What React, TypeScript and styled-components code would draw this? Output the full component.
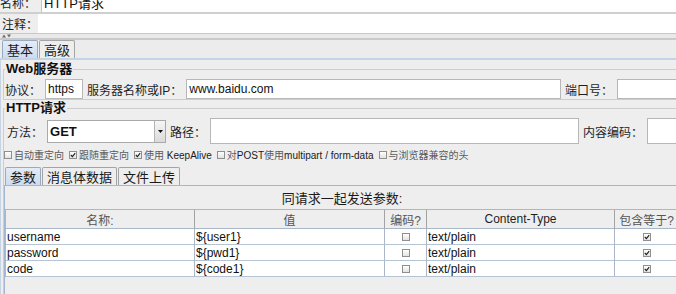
import styled, { createGlobalStyle, css } from 'styled-components'

type Param = {
  name: string
  value: string
  encode: boolean
  contentType: string
  includeEquals: boolean
}

const params: Param[] = [
  { name: 'username', value: '${user1}', encode: false, contentType: 'text/plain', includeEquals: true },
  { name: 'password', value: '${pwd1}', encode: false, contentType: 'text/plain', includeEquals: true },
  { name: 'code', value: '${code1}', encode: false, contentType: 'text/plain', includeEquals: true },
]

function CheckBox({ checked }: { checked?: boolean }) {
  return (
    <Box>
      {checked && (
        <svg width="6" height="6" viewBox="0 0 6 6">
          <path d="M0.8 3 L2.4 4.6 L5.2 1.1" stroke="#1f1f1f" strokeWidth="1.1" fill="none" />
        </svg>
      )}
    </Box>
  )
}

export default function App() {
  return (
    <Page>
      <GlobalStyle />
      <NameRow>
        <FieldLabel $pad={0} $w={41}>名称：</FieldLabel>
        <TextBox $flat>HTTP请求</TextBox>
      </NameRow>
      <CommentRow>
        <FieldLabel $pad={2} $w={38}>注释：</FieldLabel>
        <TextBox $flat $noBorder />
      </CommentRow>
      <Splitter>
        <svg width="12" height="4" viewBox="0 0 12 4">
          <path d="M2 3.5 L4 0.5 L6 3.5 Z" fill="#6b6b6b" />
          <path d="M7 0.5 L11 0.5 L9 3.5 Z" fill="#6b6b6b" />
        </svg>
      </Splitter>
      <MainTabBar>
        <Tab $active>基本</Tab>
        <Tab>高级</Tab>
      </MainTabBar>
      <ContentPanel>
        <Fieldset>
          <Legend>Web服务器</Legend>
          <FormRow $h={20} $top={2}>
            <FieldLabel $pad={1}>协议：</FieldLabel>
            <TextBox $w={38}>https</TextBox>
            <FieldLabel>服务器名称或IP：</FieldLabel>
            <TextBox>www.baidu.com</TextBox>
            <FieldLabel>端口号：</FieldLabel>
            <TextBox $w={62} />
          </FormRow>
        </Fieldset>
        <Fieldset $grow>
          <Legend>HTTP请求</Legend>
          <FormRow $h={26} $top={2}>
            <FieldLabel $pad={3}>方法：</FieldLabel>
            <Select>
              <SelectValue>GET</SelectValue>
              <SelectArrow>
                <svg width="5" height="3" viewBox="0 0 5 3">
                  <path d="M0 0 L5 0 L2.5 3 Z" fill="#111" />
                </svg>
              </SelectArrow>
            </Select>
            <FieldLabel>路径：</FieldLabel>
            <TextBox $h={26} />
            <FieldLabel>内容编码：</FieldLabel>
            <TextBox $h={26} $w={32} />
          </FormRow>
          <OptionRow>
            <Option>
              <CheckBox />
              <span>自动重定向</span>
            </Option>
            <Option>
              <CheckBox checked />
              <span>跟随重定向</span>
            </Option>
            <Option>
              <CheckBox checked />
              <span>
                使用 <Latin>KeepAlive</Latin>
              </span>
            </Option>
            <Option>
              <CheckBox />
              <span>
                对<Latin>POST</Latin>使用<Latin>multipart / form-data</Latin>
              </span>
            </Option>
            <Option>
              <CheckBox />
              <span>与浏览器兼容的头</span>
            </Option>
          </OptionRow>
          <SubTabBar>
            <SubTab $active>参数</SubTab>
            <SubTab>消息体数据</SubTab>
            <SubTab>文件上传</SubTab>
          </SubTabBar>
          <SubPanel>
            <TableTitle>同请求一起发送参数:</TableTitle>
            <ParamTable>
              <HeadCell>名称:</HeadCell>
              <HeadCell>值</HeadCell>
              <HeadCell>编码?</HeadCell>
              <HeadCell $latin>Content-Type</HeadCell>
              <HeadCell>包含等于?</HeadCell>
              {params.map((p) => (
                <Row key={p.name}>
                  <Cell>{p.name}</Cell>
                  <Cell>{p.value}</Cell>
                  <Cell $center>
                    <CheckBox checked={p.encode} />
                  </Cell>
                  <Cell>{p.contentType}</Cell>
                  <Cell $center>
                    <CheckBox checked={p.includeEquals} />
                  </Cell>
                </Row>
              ))}
            </ParamTable>
          </SubPanel>
        </Fieldset>
      </ContentPanel>
    </Page>
  )
}

const GlobalStyle = createGlobalStyle`
  html, body {
    margin: 0;
    padding: 0;
    background: #eeeeee;
    overflow: hidden;
  }

  body {
    font-family: "Liberation Sans", "Noto Sans CJK SC", sans-serif;
    color: #1c1c1c;
  }
`

const Page = styled.div`
  width: 679px;
  height: 294px;
  overflow: hidden;
  display: flex;
  flex-direction: column;
  background: #eeeeee;
`

const NameRow = styled.div`
  display: flex;
  align-items: stretch;
  height: 20px;
  margin-top: -8px;
  flex-shrink: 0;
  border-bottom: 2px solid #cfcfcf;
  font-size: 13px;
`

const CommentRow = styled.div`
  display: flex;
  align-items: stretch;
  height: 19px;
  flex-shrink: 0;
  border-bottom: 1px solid #c8c8c8;
`

const Splitter = styled.div`
  height: 4px;
  flex-shrink: 0;
  display: flex;
  align-items: flex-start;
  border-bottom: 2px solid #c9c9cd;
  background: #e9e9e9;
  svg {
    display: block;
  }
`

const FieldLabel = styled.span<{ $pad?: number; $w?: number }>`
  display: flex;
  align-items: center;
  flex-shrink: 0;
  font-size: 12px;
  color: #1e1e1e;
  white-space: nowrap;
  padding-left: ${({ $pad }) => $pad ?? 0}px;
  ${({ $w }) =>
    $w &&
    css`
      width: ${$w}px;
      box-sizing: border-box;
    `}
`

const TextBox = styled.div<{ $w?: number; $h?: number; $flat?: boolean; $noBorder?: boolean }>`
  box-sizing: border-box;
  height: ${({ $h }) => $h ?? 20}px;
  display: flex;
  align-items: center;
  padding: 0 2px;
  background: #ffffff;
  border: 1px solid #b7b7b7;
  font-size: 12px;
  color: #111;
  white-space: nowrap;
  overflow: hidden;
  ${({ $w }) =>
    $w
      ? css`
          width: ${$w}px;
          flex-shrink: 0;
        `
      : css`
          flex: 1;
          min-width: 0;
        `}
  ${({ $flat }) =>
    $flat &&
    css`
      height: auto;
      font-size: 13px;
      border-width: 0 0 0 1px;
      border-color: #c4c4c4;
    `}
  ${({ $noBorder }) =>
    $noBorder &&
    css`
      border: none;
    `}
`

const MainTabBar = styled.div`
  display: flex;
  align-items: flex-end;
  gap: 1px;
  height: 18px;
  flex-shrink: 0;
  padding-left: 2px;
  background: #ececec;
  border-bottom: 2px solid #c3d4e9;
`

const tabLook = css<{ $active?: boolean }>`
  box-sizing: border-box;
  display: flex;
  align-items: center;
  font-size: 13px;
  color: #1a1a1a;
  border: 1px solid #a4a4a4;
  border-bottom: none;
  border-radius: 2px 2px 0 0;
  background: #eeeeee;
  white-space: nowrap;
  ${({ $active }) =>
    $active &&
    css`
      border-color: #98aac0;
      background: linear-gradient(#e3ecf6, #cddcee);
    `}
`

const Tab = styled.div<{ $active?: boolean }>`
  ${tabLook}
  height: 18px;
  padding: 0 4px;
`

const ContentPanel = styled.div`
  flex: 1;
  min-height: 0;
  display: flex;
  flex-direction: column;
  padding-top: 1px;
  border-left: 1px solid #c6d3e2;
`

const Fieldset = styled.fieldset<{ $grow?: boolean }>`
  margin: 0 0 0 2px;
  padding: 0 0 0 0;
  border: 1px solid #cdcdcd;
  border-right: none;
  min-width: 0;
  display: flex;
  flex-direction: column;
  ${({ $grow }) =>
    $grow &&
    css`
      flex: 1;
      min-height: 0;
      margin-top: 0;
      border-bottom: none;
    `}
`

const Legend = styled.legend`
  font-size: 13px;
  font-weight: 700;
  line-height: 16px;
  padding: 0 1px;
  margin-left: 1px;
  color: #111;
`

const FormRow = styled.div<{ $h: number; $top: number }>`
  display: flex;
  align-items: center;
  gap: 4px;
  height: ${({ $h }) => $h}px;
  margin-top: ${({ $top }) => $top}px;
  flex-shrink: 0;
`

const Select = styled.div`
  box-sizing: border-box;
  width: 119px;
  height: 23px;
  flex-shrink: 0;
  display: flex;
  background: #ffffff;
  border: 1px solid #a9a9a9;
`

const SelectValue = styled.span`
  flex: 1;
  display: flex;
  align-items: center;
  padding-left: 2px;
  font-size: 13px;
  font-weight: 700;
  color: #111;
`

const SelectArrow = styled.span`
  width: 10px;
  display: flex;
  align-items: center;
  justify-content: center;
  border-left: 1px solid #b4b4b4;
  background: linear-gradient(#f6f6f6, #dadada);
`

const OptionRow = styled.div`
  display: flex;
  align-items: center;
  gap: 5px;
  height: 17px;
  margin-top: 2px;
  padding-left: 0;
  flex-shrink: 0;
  font-size: 10px;
  color: #5a5a5a;
  white-space: nowrap;
`

const Option = styled.span`
  display: flex;
  align-items: center;
  gap: 2px;
`

const Latin = styled.span`
  color: #1a1a1a;
`

const Box = styled.span`
  box-sizing: border-box;
  width: 8px;
  height: 8px;
  display: inline-flex;
  align-items: center;
  justify-content: center;
  border: 1px solid #8f8f8f;
  background: linear-gradient(#ffffff, #e2e2e2);
  svg {
    display: block;
  }
`

const SubTabBar = styled.div`
  display: flex;
  align-items: flex-end;
  gap: 1px;
  height: 18px;
  margin-top: 4px;
  padding-left: 1px;
  flex-shrink: 0;
`

const SubTab = styled.div<{ $active?: boolean }>`
  ${tabLook}
  height: 18px;
  padding: 0 4px;
`

const SubPanel = styled.div`
  flex: 1;
  min-height: 0;
  display: flex;
  flex-direction: column;
  border-top: 1px solid #a3b7d0;
  border-left: 1px solid #a3b7d0;
`

const TableTitle = styled.div`
  height: 23px;
  flex-shrink: 0;
  display: flex;
  align-items: center;
  justify-content: center;
  font-size: 13px;
  color: #1a1a1a;
`

const ParamTable = styled.div`
  display: grid;
  grid-template-columns: 189px 190px 42px 188px 1fr;
  border-top: 1px solid #a9b7c8;
  border-left: 1px solid #a9b7c8;
  flex-shrink: 0;
`

const HeadCell = styled.div<{ $latin?: boolean }>`
  box-sizing: border-box;
  height: 19px;
  display: flex;
  align-items: center;
  justify-content: center;
  font-size: 12px;
  color: ${({ $latin }) => ($latin ? '#1e1e1e' : '#555555')};
  background: #eeeeee;
  border-right: 1px solid #a3a3a3;
  border-bottom: 1px solid #a9b7c8;
  white-space: nowrap;
  overflow: hidden;
`

const Row = styled.div`
  display: contents;
`

const Cell = styled.div<{ $center?: boolean }>`
  box-sizing: border-box;
  height: 16px;
  display: flex;
  align-items: center;
  padding-left: 1px;
  font-size: 12px;
  color: #111;
  background: #ffffff;
  border-right: 1px solid #a9b7c8;
  border-bottom: 1px solid #b6c3d3;
  white-space: nowrap;
  overflow: hidden;
  ${({ $center }) =>
    $center &&
    css`
      justify-content: center;
      padding-left: 0;
    `}
`
